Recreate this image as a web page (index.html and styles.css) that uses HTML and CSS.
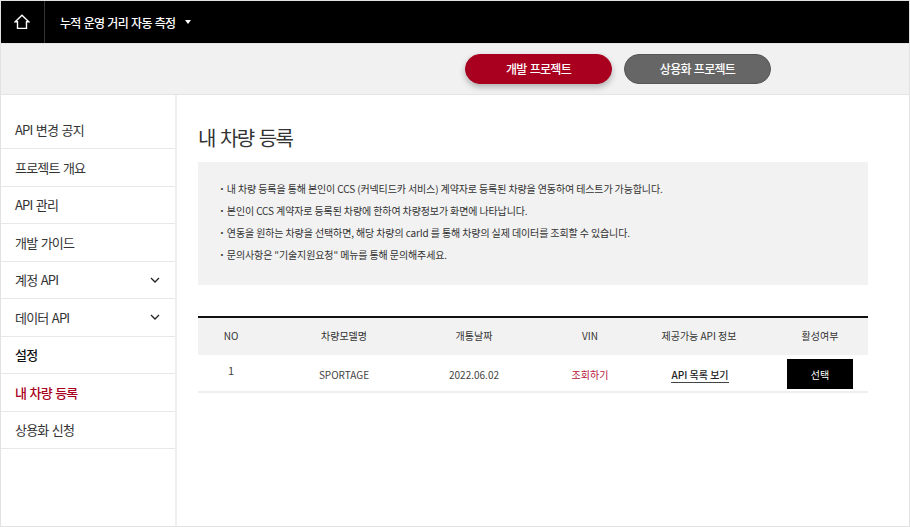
FILE: index.html
```html
<!DOCTYPE html>
<html>
<head>
    <title>내 차량 등록</title>
    <link rel="stylesheet" href="styles.css">
</head>
<body>
    <div class="frame">
        <div class="header">
            <a class="home">
                <svg width="16" height="16" viewBox="0 0 16 16" fill="none" stroke="#fff" stroke-width="1.4">
                    <path d="M1.2 7.8 8 1.2l6.8 6.6h-2.3v6.6h-9V7.8z"/>
                </svg>
            </a>
            <div class="service">누적 운영 거리 자동 측정<span class="caret"></span></div>
        </div>
        <div class="tabs">
            <button class="tab tab-on">개발 프로젝트</button>
            <button class="tab">상용화 프로젝트</button>
        </div>
        <div class="main">
            <ul class="side">
                <li>API 변경 공지</li>
                <li>프로젝트 개요</li>
                <li>API 관리</li>
                <li>개발 가이드</li>
                <li>계정 API<svg class="chev" width="10" height="6" viewBox="0 0 10 6" fill="none" stroke="#222" stroke-width="1.3"><path d="M1 1l4 4 4-4"/></svg></li>
                <li>데이터 API<svg class="chev" width="10" height="6" viewBox="0 0 10 6" fill="none" stroke="#222" stroke-width="1.3"><path d="M1 1l4 4 4-4"/></svg></li>
                <li class="group">설정</li>
                <li class="active">내 차량 등록</li>
                <li>상용화 신청</li>
            </ul>
            <div class="content">
                <h2>내 차량 등록</h2>
                <ul class="info">
                    <li>내 차량 등록을 통해 본인이 CCS (커넥티드카 서비스) 계약자로 등록된 차량을 연동하여 테스트가 가능합니다.</li>
                    <li>본인이 CCS 계약자로 등록된 차량에 한하여 차량정보가 화면에 나타납니다.</li>
                    <li>연동을 원하는 차량을 선택하면, 해당 차량의 carId 를 통해 차량의 실제 데이터를 조회할 수 있습니다.</li>
                    <li>문의사항은 "기술지원요청" 메뉴를 통해 문의해주세요.</li>
                </ul>
                <table>
                    <thead>
                        <tr>
                            <th class="c-no">NO</th>
                            <th class="c-model">차량모델명</th>
                            <th class="c-date">개통날짜</th>
                            <th class="c-vin">VIN</th>
                            <th class="c-api">제공가능 API 정보</th>
                            <th class="c-use">활성여부</th>
                        </tr>
                    </thead>
                    <tbody>
                        <tr>
                            <td class="num"><span>1</span></td>
                            <td>SPORTAGE</td>
                            <td>2022.06.02</td>
                            <td><a class="red">조회하기</a></td>
                            <td class="list"><a class="line">API 목록 보기</a></td>
                            <td class="c-use"><button class="pick">선택</button></td>
                        </tr>
                    </tbody>
                </table>
            </div>
        </div>
    </div>
</body>
</html>
```

FILE: styles.css
```css
* { box-sizing: border-box; }
html, body { margin: 0; padding: 0; }
body { width: 910px; height: 527px; overflow: hidden; background: #fff; font-family: "Noto Sans CJK KR", "Noto Sans", sans-serif; color: #333; }
ul { list-style: none; margin: 0; padding: 0; }

.frame { width: 910px; height: 527px; border: 1px solid #e2e2e2; display: flex; flex-direction: column; }

.header { height: 42px; background: #000; color: #fff; display: flex; align-items: center; flex: none; }
.home { width: 44px; height: 42px; border-right: 1px solid #333; display: flex; align-items: center; justify-content: center; padding-right: 2px; }
.service { font-size: 12px; font-weight: 500; letter-spacing: -0.7px; word-spacing: 1px; padding-left: 15px; display: flex; align-items: center; }
.caret { width: 0; height: 0; margin-left: 10px; border: 3.5px solid transparent; border-top: 4px solid #fff; border-bottom: 0; }

.tabs { height: 52px; flex: none; background: #f1f1f1; border-top: 1px solid #e4e4e4; border-bottom: 1px solid #e4e4e4; display: flex; gap: 12px; padding: 10px 0 0 464px; }
.tab { width: 147px; height: 30px; border-radius: 15px; border: 1px solid #555; background: #666; color: #fff; font-family: inherit; font-size: 12px; font-weight: 500; letter-spacing: -0.7px; word-spacing: 1px; padding: 0 0 2px; }
.tab-on { background: #a90020; border-color: #a90020; box-shadow: 0 3px 6px rgba(0, 0, 0, 0.28); }

.main { flex: 1; display: flex; min-height: 0; }
.side { width: 176px; flex: none; border-right: 2px solid #efefef; padding-top: 16.5px; }
.side li { height: 37.5px; border-bottom: 1px solid #e8e8e8; padding: 0 15px 0 14px; font-size: 13px; letter-spacing: -0.8px; word-spacing: 1.2px; line-height: 37px; display: flex; align-items: center; justify-content: space-between; }
.side .group { color: #111; font-weight: 500; }
.side .active { color: #a90020; font-weight: 500; }

.content { flex: 1; padding: 27px 41px 0 21px; }
h2 { margin: 0 0 9px; padding-top: 1px; font-size: 20px; font-weight: 400; letter-spacing: -1.5px; word-spacing: 2px; line-height: 30px; color: #333; }
.info { height: 123px; background: #f2f2f2; padding: 16px 0 0 22px; font-size: 10px; line-height: 22px; letter-spacing: -0.12px; color: #333; }
.info li::before { content: "·"; font-weight: 700; margin-right: 2px; margin-left: -1px; }

table { width: 670px; margin-top: 31px; border-collapse: collapse; table-layout: fixed; font-size: 10px; border-top: 2px solid #111; }
th { height: 38px; background: #f2f2f2; font-weight: 400; color: #333; text-align: center; padding: 0 0 2px; }
td { height: 37px; text-align: center; padding: 3px 0 0; border-bottom: 2px solid #eee; color: #444; }
.c-no { width: 66px; }
.c-model { width: 160px; }
.c-date { width: 100px; }
.c-vin { width: 132px; }
.c-api { width: 86px; white-space: nowrap; }
th.c-use { padding-left: 30px; }
td.c-use { padding-left: 30px; }
.num { padding: 0 0 6px; font-size: 11px; }
.red { color: #b5153a; }
td.list { padding-left: 2px; }
.line { color: #222; border-bottom: 1px solid #444; font-weight: 500; }
.pick { width: 66px; height: 30px; background: #000; color: #fff; border: 0; font-family: inherit; font-size: 10px; padding: 0; vertical-align: middle; margin-top: -1px; }
```
